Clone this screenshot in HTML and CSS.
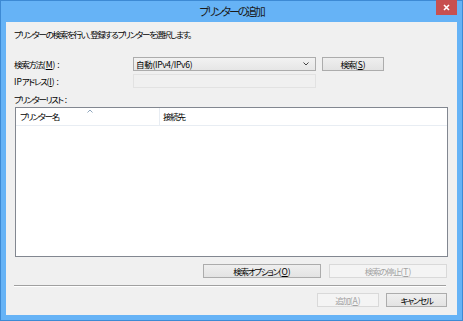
FILE: index.html
```html
<!DOCTYPE html>
<html lang="ja">
<head>
    <meta charset="UTF-8">
    <title>プリンターの追加</title>
    <link rel="stylesheet" href="styles.css">
</head>
<body>
    <div class="window">
        <div class="titlebar">
            <span class="title">プリンターの追加</span>
            <button class="close" title="閉じる">
                <svg width="7" height="7" viewBox="0 0 7 7"><path d="M1 1L6 6M6 1L1 6" stroke="#fff" stroke-width="1.6"/></svg>
            </button>
        </div>
        <div class="client">
            <p class="intro">プリンターの検索を行い、登録するプリンターを選択します。</p>

            <div class="form">
                <label>検索方法<span class="key">(<u>M</u>) :</span></label>
                <div class="select">
                    <span>自動(IPv4/IPv6)</span>
                    <svg width="6" height="4" viewBox="0 0 6 4"><path d="M0.5 0.5L3 3L5.5 0.5" fill="none" stroke="#444" stroke-width="1"/></svg>
                </div>
                <button class="btn">検索<span class="key">(<u>S</u>)</span></button>

                <label><span class="key">IP</span>アドレス<span class="key">(<u>I</u>) :</span></label>
                <div class="input disabled"></div>
            </div>

            <div class="list-label">プリンターリスト<span class="key"> :</span></div>
            <div class="list">
                <div class="list-head">
                    <div class="col col-name">
                        プリンター名
                        <svg class="sort" width="6" height="4" viewBox="0 0 6 4"><path d="M0.5 3.5L3 1L5.5 3.5" fill="none" stroke="#8fa6bd" stroke-width="1"/></svg>
                    </div>
                    <div class="col col-dest">接続先</div>
                </div>
            </div>

            <div class="actions">
                <button class="btn wide">検索オプション<span class="key">(<u>O</u>)</span></button>
                <button class="btn wide" disabled>検索の停止<span class="key">(<u>T</u>)</span></button>
            </div>

            <div class="separator"></div>

            <div class="footer">
                <button class="btn small" disabled>追加<span class="key">(<u>A</u>)</span></button>
                <button class="btn small">キャンセル</button>
            </div>
        </div>
    </div>
</body>
</html>
```

FILE: styles.css
```css
* {
    box-sizing: border-box;
}
body {
    margin: 0;
    font-family: "Noto Sans CJK JP", "Noto Sans", sans-serif;
    font-size: 8.5px;
    font-feature-settings: "palt";
    letter-spacing: -1.3px;
    color: #000;
    background: #fff;
}
.key {
    letter-spacing: 0;
}
.window {
    width: 463px;
    height: 321px;
    border: 1px solid #3d8ad4;
    background: #66b3f6;
    display: flex;
    flex-direction: column;
}
.titlebar {
    height: 21px;
    display: grid;
    grid-template-areas: "bar";
}
.title {
    grid-area: bar;
    justify-self: center;
    align-self: center;
    font-size: 11px;
    letter-spacing: -2.2px;
    color: #1a1a1a;
    margin-top: -1px;
}
.close {
    grid-area: bar;
    justify-self: end;
    align-self: start;
    width: 21px;
    height: 15px;
    margin: -1px 5px 0 0;
    border: none;
    padding: 0;
    background: #c75050;
    display: flex;
    align-items: center;
    justify-content: center;
}
.client {
    flex: 1;
    margin: 0 5px 5px;
    background: #f0f0f0;
    padding: 0 10px 0 8px;
    display: flex;
    flex-direction: column;
}
.intro {
    margin: 6px 0 0;
    line-height: 12px;
}
.form {
    margin-top: 17px;
    display: grid;
    grid-template-columns: 113px 183px 62px;
    grid-auto-rows: 14px;
    column-gap: 6px;
    row-gap: 3px;
    align-items: center;
}
.form label {
    line-height: 14px;
}
.select {
    height: 14px;
    border: 1px solid #acacac;
    background: linear-gradient(#f2f2f2, #e6e6e6);
    display: flex;
    align-items: center;
    justify-content: space-between;
    padding: 0 6px 0 2px;
    line-height: 12px;
    letter-spacing: -0.3px;
}
.input {
    height: 14px;
    border: 1px solid #e2e2e2;
    background: #f0f0f0;
}
.btn {
    font: inherit;
    font-feature-settings: "palt";
    letter-spacing: -1.3px;
    height: 14px;
    padding: 0;
    line-height: 12px;
    border: 1px solid #acacac;
    background: linear-gradient(#efefef, #e3e3e3);
    color: #000;
}
.btn:disabled {
    border-color: #d9d9d9;
    background: #f4f4f4;
    color: #a3a3a3;
}
.list-label {
    margin-top: 5px;
    line-height: 12px;
}
.list {
    margin: 2px 0 0 1px;
    width: 433px;
    height: 150px;
    border: 1px solid #828790;
    background: #fff;
}
.list-head {
    height: 18px;
    display: flex;
    border-bottom: 1px solid #e8edf3;
}
.col {
    line-height: 17px;
}
.col-name {
    width: 144px;
    padding-left: 4px;
    border-right: 1px solid #e8edf3;
    position: relative;
}
.sort {
    position: absolute;
    left: 71px;
    top: 1px;
}
.col-dest {
    padding-left: 3px;
}
.actions {
    margin-top: 7px;
    display: flex;
    justify-content: flex-end;
    gap: 8px;
}
.wide {
    width: 118px;
}
.separator {
    margin: 7px 1px 0 0;
    border-top: 1px solid #a0a0a0;
    border-bottom: 1px solid #fff;
}
.footer {
    margin-top: 6px;
    display: flex;
    justify-content: flex-end;
    gap: 7px;
}
.small {
    width: 62px;
}
.small:last-child {
    width: 61px;
}
```
